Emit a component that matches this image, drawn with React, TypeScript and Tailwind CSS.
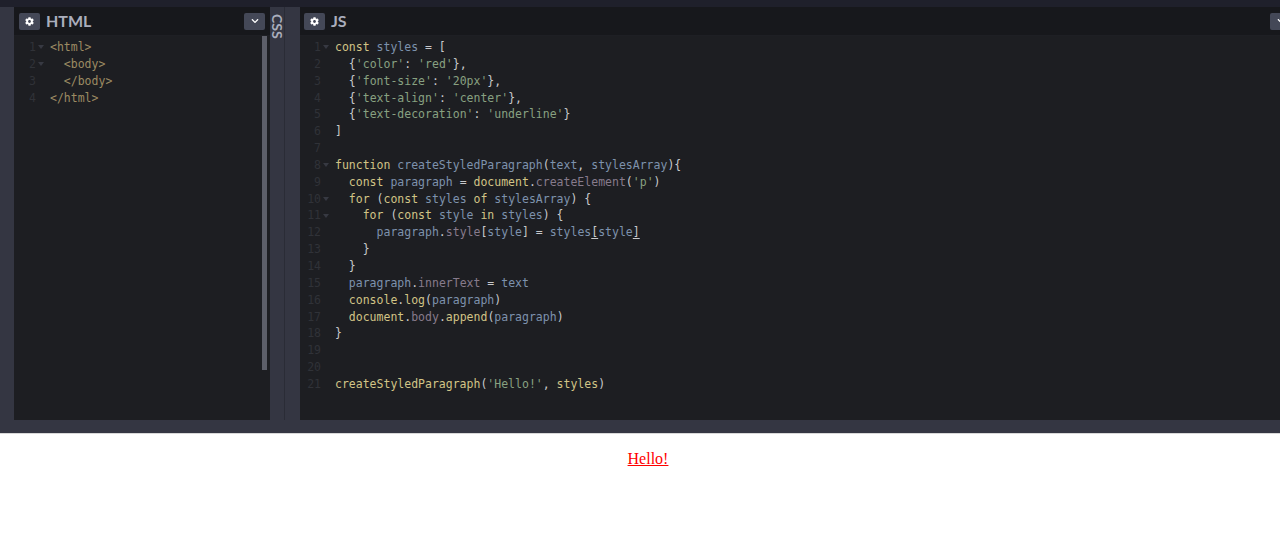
import { FaCog, FaChevronDown } from "react-icons/fa";

type Token = [string, string];

const K = "text-[#d2c486]";
const V = "text-[#7d92ad]";
const S = "text-[#88a181]";
const P = "text-[#c8c9cc]";
const M = "text-[#877b8c]";
const T = "text-[#9c8b63]";

const htmlLines: { tokens: Token[]; fold?: boolean }[] = [
  { tokens: [["<html>", T]], fold: true },
  { tokens: [["  <body>", T]], fold: true },
  { tokens: [["  </body>", T]] },
  { tokens: [["</html>", T]] },
];

const jsLines: { tokens: Token[]; fold?: boolean }[] = [
  { tokens: [["const ", K], ["styles ", V], ["= [", P]], fold: true },
  { tokens: [["  {", P], ["'color'", S], [": ", P], ["'red'", S], ["},", P]] },
  { tokens: [["  {", P], ["'font-size'", S], [": ", P], ["'20px'", S], ["},", P]] },
  { tokens: [["  {", P], ["'text-align'", S], [": ", P], ["'center'", S], ["},", P]] },
  { tokens: [["  {", P], ["'text-decoration'", S], [": ", P], ["'underline'", S], ["}", P]] },
  { tokens: [["]", P]] },
  { tokens: [] },
  { tokens: [["function ", K], ["createStyledParagraph", V], ["(", P], ["text", V], [", ", P], ["stylesArray", V], ["){", P]], fold: true },
  { tokens: [["  const ", K], ["paragraph ", V], ["= ", P], ["document", K], [".", P], ["createElement", M], ["(", P], ["'p'", S], [")", P]] },
  { tokens: [["  for ", K], ["(", P], ["const ", K], ["styles ", V], ["of ", K], ["stylesArray", V], [") {", P]], fold: true },
  { tokens: [["    for ", K], ["(", P], ["const ", K], ["style ", V], ["in ", K], ["styles", V], [") {", P]], fold: true },
  { tokens: [["      paragraph", V], [".", P], ["style", M], ["[", P], ["style", V], ["] = ", P], ["styles", V], ["[", "text-[#c8c9cc] underline underline-offset-2"], ["style", V], ["]", "text-[#c8c9cc] underline underline-offset-2"]] },
  { tokens: [["    }", P]] },
  { tokens: [["  }", P]] },
  { tokens: [["  paragraph", V], [".", P], ["innerText", M], [" = ", P], ["text", V]] },
  { tokens: [["  console", K], [".", P], ["log", K], ["(", P], ["paragraph", V], [")", P]] },
  { tokens: [["  document", K], [".", P], ["body", M], [".", P], ["append", K], ["(", P], ["paragraph", V], [")", P]] },
  { tokens: [["}", P]] },
  { tokens: [] },
  { tokens: [] },
  { tokens: [["createStyledParagraph", K], ["(", P], ["'Hello!'", S], [", ", P], ["styles", K], [")", P]] },
];

function CodeLines({ lines, numClass }: { lines: { tokens: Token[]; fold?: boolean }[]; numClass: string }) {
  return (
    <div className="pt-[3px] font-['DejaVu_Sans_Mono',monospace] text-[11.5px] leading-[16.85px] whitespace-pre">
      {lines.map((line, i) => (
        <div key={i} className="flex h-[16.85px]">
          <span className={numClass}>{i + 1}</span>
          <span className="w-[14px] pl-[2px] flex items-center">
            {line.fold && (
              <span className="w-0 h-0 border-x-[3px] border-x-transparent border-t-[4px] border-t-[#373942]" />
            )}
          </span>
          <span>
            {line.tokens.map(([text, cls], j) => (
              <span key={j} className={cls}>
                {text}
              </span>
            ))}
          </span>
        </div>
      ))}
    </div>
  );
}

function PanelHeader({ title, padClass }: { title: string; padClass: string }) {
  return (
    <div className={`h-[29px] shrink-0 flex items-center justify-between pr-[5px] bg-[#17181c] border-b border-[#1e1f24] ${padClass}`}>
      <div className="flex items-center gap-[6px]">
        <span className="w-[21px] h-[17px] rounded-[2px] bg-[#444857] flex items-center justify-center text-white">
          <FaCog size={9} />
        </span>
        <span className="font-['Lato',sans-serif] font-bold text-[16px] text-[#aaaebc]">{title}</span>
      </div>
      <span className="w-[21px] h-[17px] shrink-0 rounded-[2px] bg-[#444857] flex items-center justify-center text-white">
        <FaChevronDown size={8} />
      </span>
    </div>
  );
}

export default function App() {
  return (
    <div className="h-[547px] w-[1280px] overflow-hidden flex flex-col bg-white">
      <div className="h-[7px] shrink-0 bg-[#1f202b]" />

      <div className="h-[413px] shrink-0 flex bg-[#343642]">
        <div className="w-[14px] shrink-0" />

        {/* HTML */}
        <section className="relative w-[256px] shrink-0 flex flex-col bg-[#1d1e22]">
          <PanelHeader title="HTML" padClass="pl-[5px]" />
          <CodeLines lines={htmlLines} numClass="w-[22px] text-right text-[#303238]" />
          <div className="absolute left-[248px] top-[29px] w-[5px] h-[334px] bg-[#5d5f69]" />
        </section>

        {/* CSS collapsed */}
        <div className="w-[15px] shrink-0 flex justify-center border-r border-[#2a2c36] pt-[7px]">
          <span className="font-['Lato',sans-serif] font-bold text-[14px] leading-[15px] text-[#aaaebc] [writing-mode:vertical-rl]">
            CSS
          </span>
        </div>
        <div className="w-[15px] shrink-0" />

        {/* JS */}
        <section className="flex-1 min-w-0 flex flex-col bg-[#1d1e22] overflow-hidden">
          <div className="w-[996px] shrink-0">
            <PanelHeader title="JS" padClass="pl-[4px]" />
          </div>
          <CodeLines lines={jsLines} numClass="w-[21px] text-right text-[#303238]" />
        </section>
      </div>

      <div className="h-[13px] shrink-0 bg-[#343642]" />

      <main className="flex-1 border-t border-[#d8d8d8] pl-[16px] pt-[13px] text-center font-['Liberation_Serif',serif] text-[16px] leading-[24px] text-[#ff0000] underline">
        Hello!
      </main>
    </div>
  );
}
